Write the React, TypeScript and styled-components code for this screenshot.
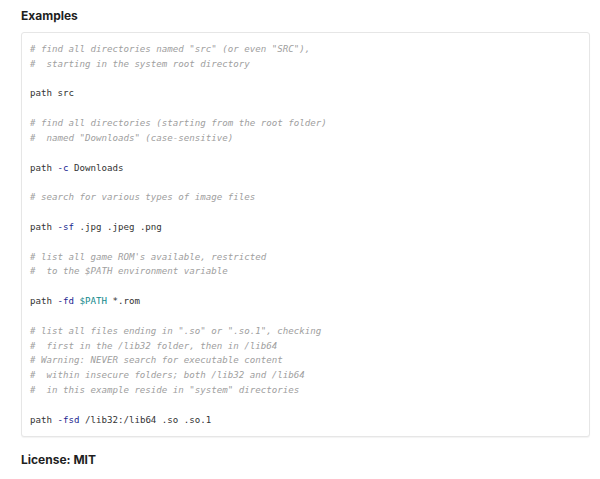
import React from "react";
import styled, { createGlobalStyle } from "styled-components";

const Global = createGlobalStyle`
  html, body { margin: 0; padding: 0; background: #fff; }
  body { font-family: Inter, "Noto Sans", sans-serif; }
`;

const Page = styled.div`
  padding: 7px 10px 0 21px;
  display: flex;
  flex-direction: column;
`;

const Heading = styled.h3`
  margin: 0;
  font-family: Inter, "Noto Sans", sans-serif;
  font-weight: 700;
  font-size: 12px;
  line-height: 18px;
  color: #1f1f1f;
`;

const CodeBox = styled.pre`
  margin: 7px 0 0 0;
  padding: 9px 8px 8px 8px;
  border: 1px solid #e6e6e6;
  border-radius: 3px;
  box-shadow: 0 1px 1px rgba(0, 0, 0, 0.05);
  background: #fff;
  font-family: "DejaVu Sans Mono", "Liberation Mono", monospace;
  font-size: 9.15px;
  line-height: 14.84px;
  color: #333;
  white-space: pre;
  overflow: hidden;
`;

const Line = styled.div`
  height: 14.84px;
`;

const Comment = styled.span`
  color: #a0a0a0;
  font-style: italic;
`;

const Flag = styled.span`
  color: #1a1f8f;
`;

const Var = styled.span`
  color: #12898c;
`;

const Footer = styled(Heading)`
  margin-top: 14px;
`;

const C = ({ t }: { t: string }) => (
  <Line>
    <Comment>{t}</Comment>
  </Line>
);
const Blank = () => <Line> </Line>;

export default function App() {
  return (
    <>
      <Global />
      <Page>
        <Heading>Examples</Heading>
        <CodeBox>
          <C t={'# find all directories named "src" (or even "SRC"),'} />
          <C t={"#  starting in the system root directory"} />
          <Blank />
          <Line>path src</Line>
          <Blank />
          <C t={"# find all directories (starting from the root folder)"} />
          <C t={'#  named "Downloads" (case-sensitive)'} />
          <Blank />
          <Line>
            path <Flag>-c</Flag> Downloads
          </Line>
          <Blank />
          <C t={"# search for various types of image files"} />
          <Blank />
          <Line>
            path <Flag>-sf</Flag> .jpg .jpeg .png
          </Line>
          <Blank />
          <C t={"# list all game ROM's available, restricted"} />
          <C t={"#  to the $PATH environment variable"} />
          <Blank />
          <Line>
            path <Flag>-fd</Flag> <Var>$PATH</Var> *.rom
          </Line>
          <Blank />
          <C t={'# list all files ending in ".so" or ".so.1", checking'} />
          <C t={"#  first in the /lib32 folder, then in /lib64"} />
          <C t={"# Warning: NEVER search for executable content"} />
          <C t={"#  within insecure folders; both /lib32 and /lib64"} />
          <C t={'#  in this example reside in "system" directories'} />
          <Blank />
          <Line>
            path <Flag>-fsd</Flag> /lib32:/lib64 .so .so.1
          </Line>
        </CodeBox>
        <Footer>License: MIT</Footer>
      </Page>
    </>
  );
}
